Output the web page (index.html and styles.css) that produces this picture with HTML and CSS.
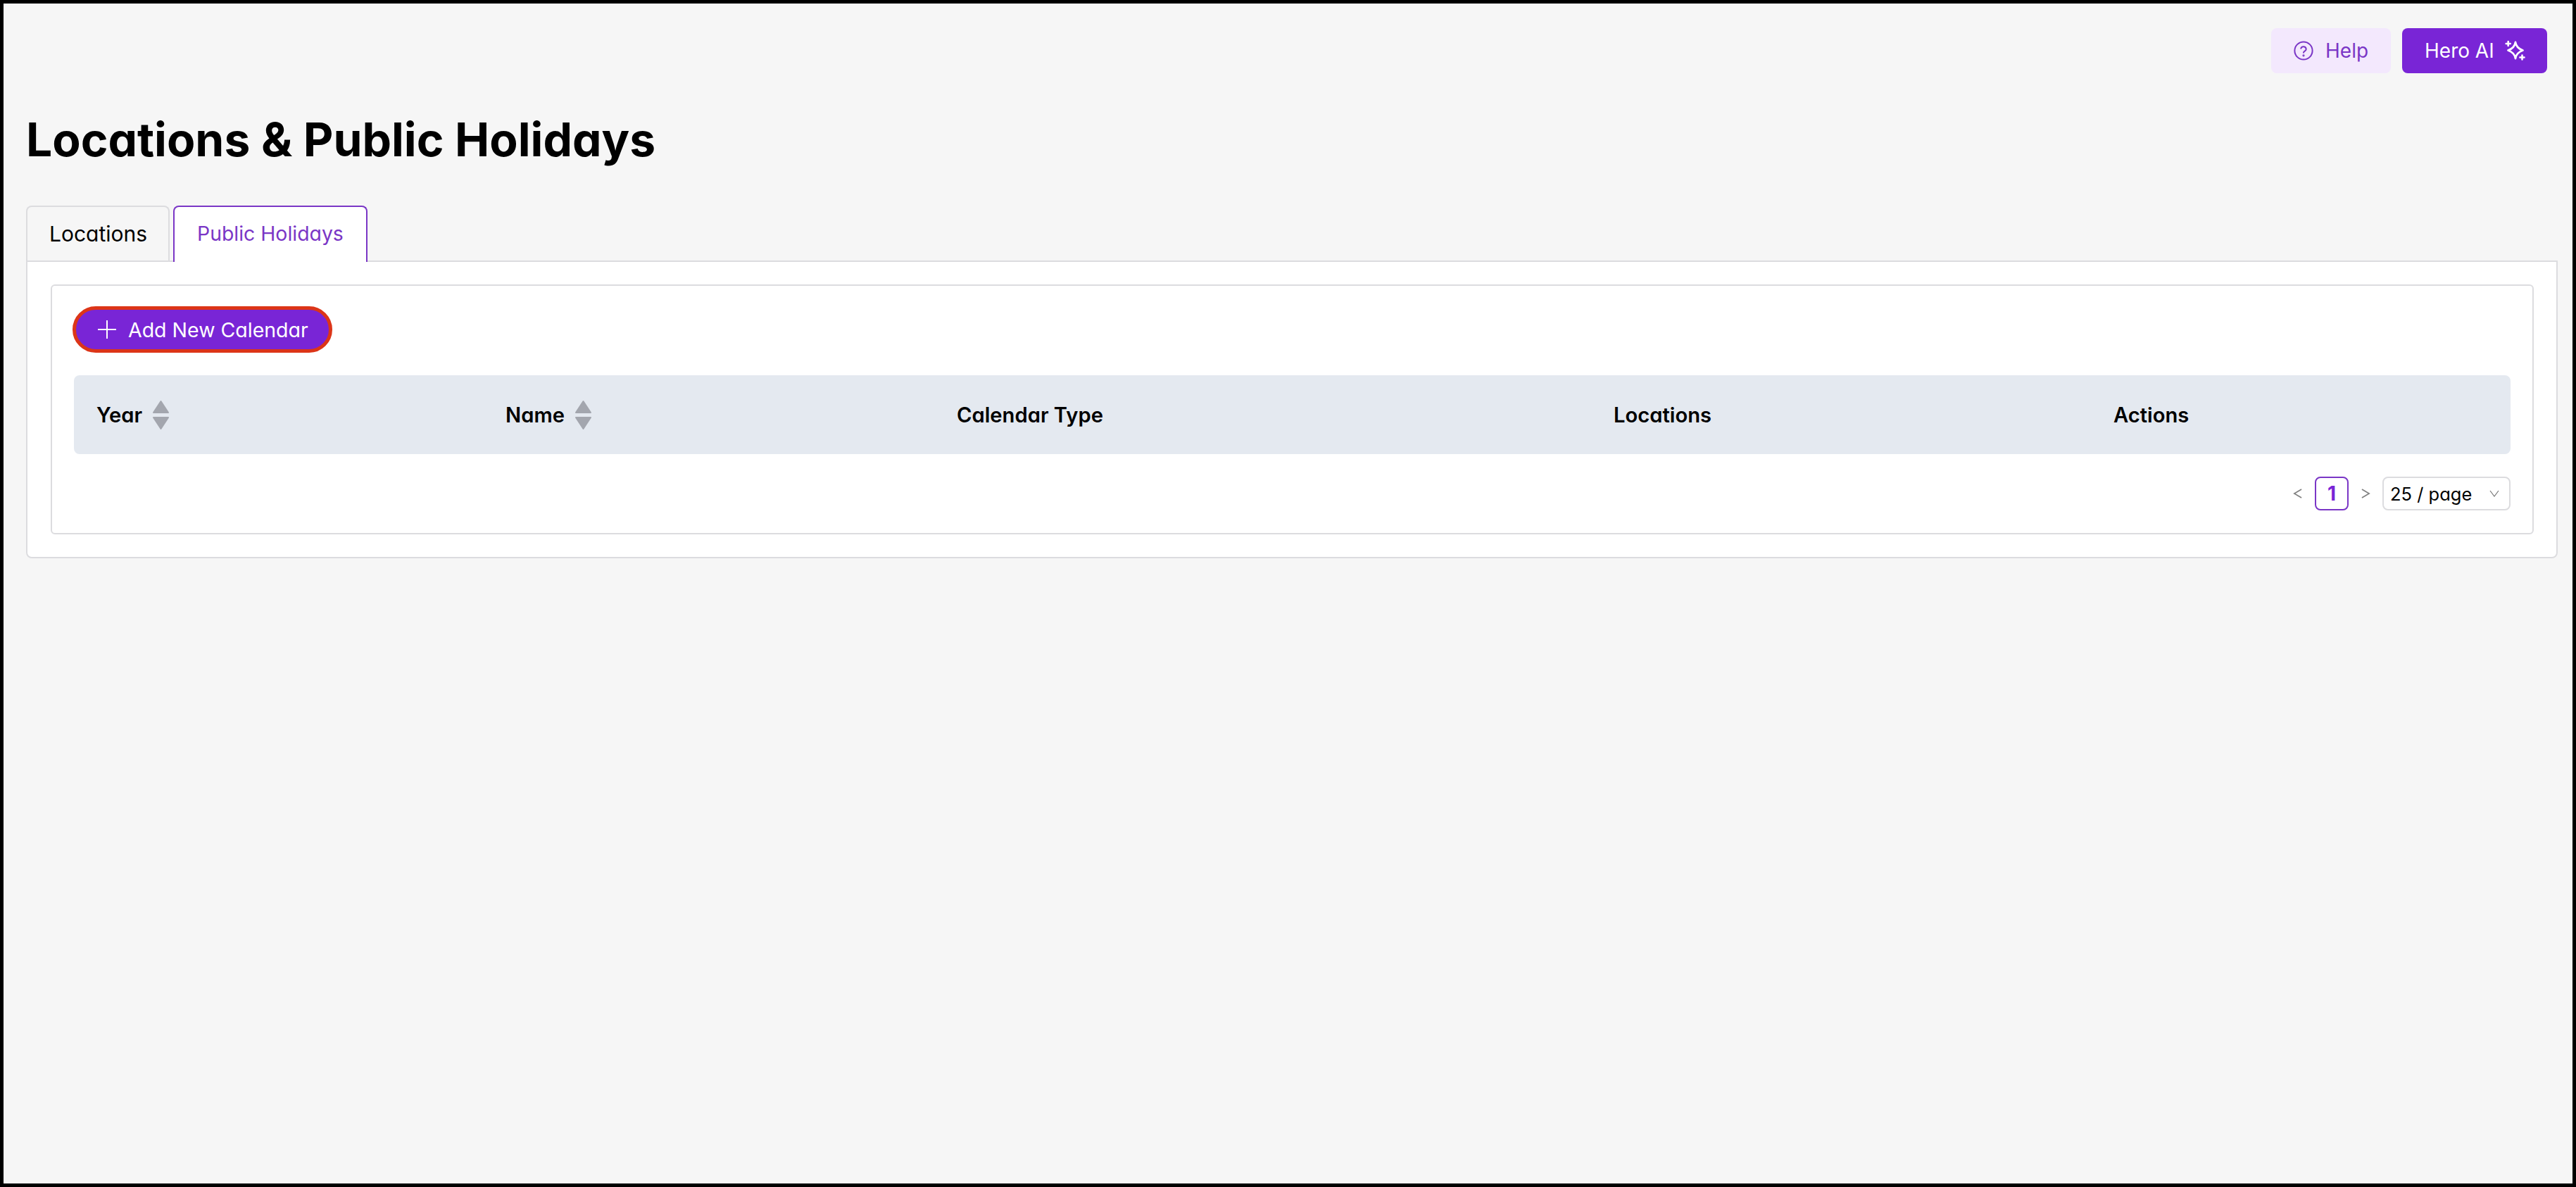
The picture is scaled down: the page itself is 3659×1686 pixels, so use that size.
FILE: index.html
```html
<!DOCTYPE html>
<html lang="en">
<head>
<meta charset="utf-8">
<title>Locations &amp; Public Holidays</title>
<link rel="stylesheet" href="styles.css">
</head>
<body>
<div class="frame">
  <header class="topbar">
    <button class="btn-help">
      <svg class="help-icon" viewBox="0 0 28 28" fill="none" stroke="currentColor" stroke-width="2" stroke-linecap="round"><circle cx="14" cy="14" r="12.600"/><path d="M10.300 10.800a3.800 3.800 0 0 1 7.400 1.200c0 2.500-3.700 2.700-3.700 4.800"/><circle cx="14" cy="20.800" r=".6"/></svg>
      <span>Help</span>
    </button>
    <button class="btn-ai">
      <span>Hero AI</span>
      <svg class="ai-icon" viewBox="0 0 30 30" fill="none" stroke="currentColor" stroke-linejoin="round" stroke-linecap="round"><path stroke-width="2.800" d="M15 3C15.800 8.500 19 12.200 25.500 14.500 19 16.800 15.800 20.500 15 26 14.200 20.500 11 16.800 4.500 14.500 11 12.200 14.200 8.500 15 3z"/><path stroke-width="2.600" d="M4.700 2v6M1.700 5h6M24.500 21.500v6M21.500 24.500h6"/></svg>
    </button>
  </header>
  <h1 class="title">Locations &amp; Public Holidays</h1>
  <nav class="tabs">
    <div class="tab">Locations</div>
    <div class="tab tab-active">Public Holidays</div>
  </nav>
  <main class="panel">
    <section class="card">
      <button class="btn-add">
        <svg class="plus" viewBox="0 0 28 28" fill="none" stroke="currentColor" stroke-width="2"><path d="M14 1v26M1 14h26"/></svg>
        <span>Add New Calendar</span>
      </button>
      <div class="thead">
        <div class="th"><span>Year</span><svg class="sort" viewBox="0 0 25 43"><path d="M12.500 2 23 18H2z"/><path d="M2 25h21L12.500 41z"/></svg></div>
        <div class="th"><span>Name</span><svg class="sort" viewBox="0 0 25 43"><path d="M12.500 2 23 18H2z"/><path d="M2 25h21L12.500 41z"/></svg></div>
        <div class="th">Calendar Type</div>
        <div class="th">Locations</div>
        <div class="th">Actions</div>
      </div>
      <div class="pager">
        <svg class="chev" viewBox="0 0 14 16" fill="none" stroke="currentColor" stroke-width="1.800"><path d="M13 1.500 2 8l11 6.500"/></svg>
        <div class="page">1</div>
        <svg class="chev" viewBox="0 0 14 16" fill="none" stroke="currentColor" stroke-width="1.800"><path d="M1 1.500 12 8 1 14.500"/></svg>
        <div class="select"><span>25 / page</span><svg class="caret" viewBox="0 0 14 10" fill="none" stroke="currentColor" stroke-width="1.200"><path d="M1 1l6 8 6-8"/></svg></div>
      </div>
    </section>
  </main>
</div>
</body>
</html>
```
FILE: styles.css
```css
* { box-sizing: border-box; }
html, body { margin: 0; padding: 0; }
body { font-family: "Inter", "Liberation Sans", sans-serif; font-feature-settings: "cv11" 1; color: #000; background: #000; }
button { font-family: inherit; font-feature-settings: inherit; border: 0; cursor: pointer; padding: 0; }
.frame { width: 3659px; height: 1686px; border: 5px solid #000; background: #f6f6f6; padding: 0 21px 0 32px; display: flex; flex-direction: column; }
.topbar { display: flex; justify-content: flex-end; gap: 16px; padding-top: 35px; padding-right: 15px; }
.btn-help, .btn-ai { height: 64px; border-radius: 8px; font-size: 28px; display: flex; align-items: center; }
.btn-help { width: 170px; background: #f3e8fd; color: #7a36c6; padding-left: 32px; gap: 17px; }
.btn-ai { width: 206px; background: #7925d6; color: #fff; padding-left: 32px; gap: 15px; }
.help-icon { width: 28px; height: 28px; }
.ai-icon { width: 30px; height: 30px; }
.title { margin: 0; font-size: 65.900px; font-weight: 700; line-height: 80px; padding-top: 54px; }
.tabs { display: flex; gap: 5px; margin-top: 54px; height: 78px; position: relative; z-index: 1; }
.tab { width: 204px; height: 78px; padding-left: 31px; border: 2px solid #dcdcdf; border-bottom: 0; border-radius: 8px 8px 0 0; font-size: 30px; line-height: 76px; white-space: nowrap; }
.tab-active { width: 276px; height: 80px; background: #fff; border-color: #7a36c6; color: #7a36c6; padding-left: 32px; font-size: 28.400px; }
.panel { background: #fff; border: 2px solid #dcdcdf; border-radius: 0 0 8px 8px; height: 423px; padding: 32px 32px 32px 33px; }
.card { border: 2px solid #dcdcdf; border-radius: 6px; height: 355px; padding: 29px 31px 0 29px; }
.btn-add { width: 369px; height: 66px; border-radius: 33px; background: #7925d6; color: #fff; border: 5px solid #dc3518; font-size: 28.500px; display: flex; align-items: center; gap: 16px; padding-left: 30px; }
.plus { width: 28px; height: 28px; }
.thead { margin: 32px 0 0 2px; height: 112px; background: #e4e9f0; border-radius: 8px; display: grid; grid-template-columns: 581px 641px 933px 710px 1fr; align-items: center; }
.th { padding-left: 32px; font-size: 29.200px; font-weight: 600; display: flex; align-items: center; gap: 14px; }
.sort { width: 25px; height: 43px; fill: #a3a6ae; stroke: #a3a6ae; stroke-width: 2; stroke-linejoin: round; }
.pager { display: flex; justify-content: flex-end; align-items: center; margin-top: 32px; height: 48px; }
.chev { width: 13px; height: 16px; color: #808080; }
.page { width: 48px; height: 48px; margin: 0 18px; border: 2px solid #7a36c6; border-radius: 8px; color: #7925d6; font-size: 28px; font-weight: 700; line-height: 45px; text-align: center; }
.select { width: 182px; height: 48px; margin-left: 17px; border: 2px solid #dcdcdf; border-radius: 8px; font-size: 25.500px; display: flex; align-items: center; justify-content: space-between; padding: 0 14px 0 9px; }
.caret { width: 14px; height: 10px; color: #777; }
```
